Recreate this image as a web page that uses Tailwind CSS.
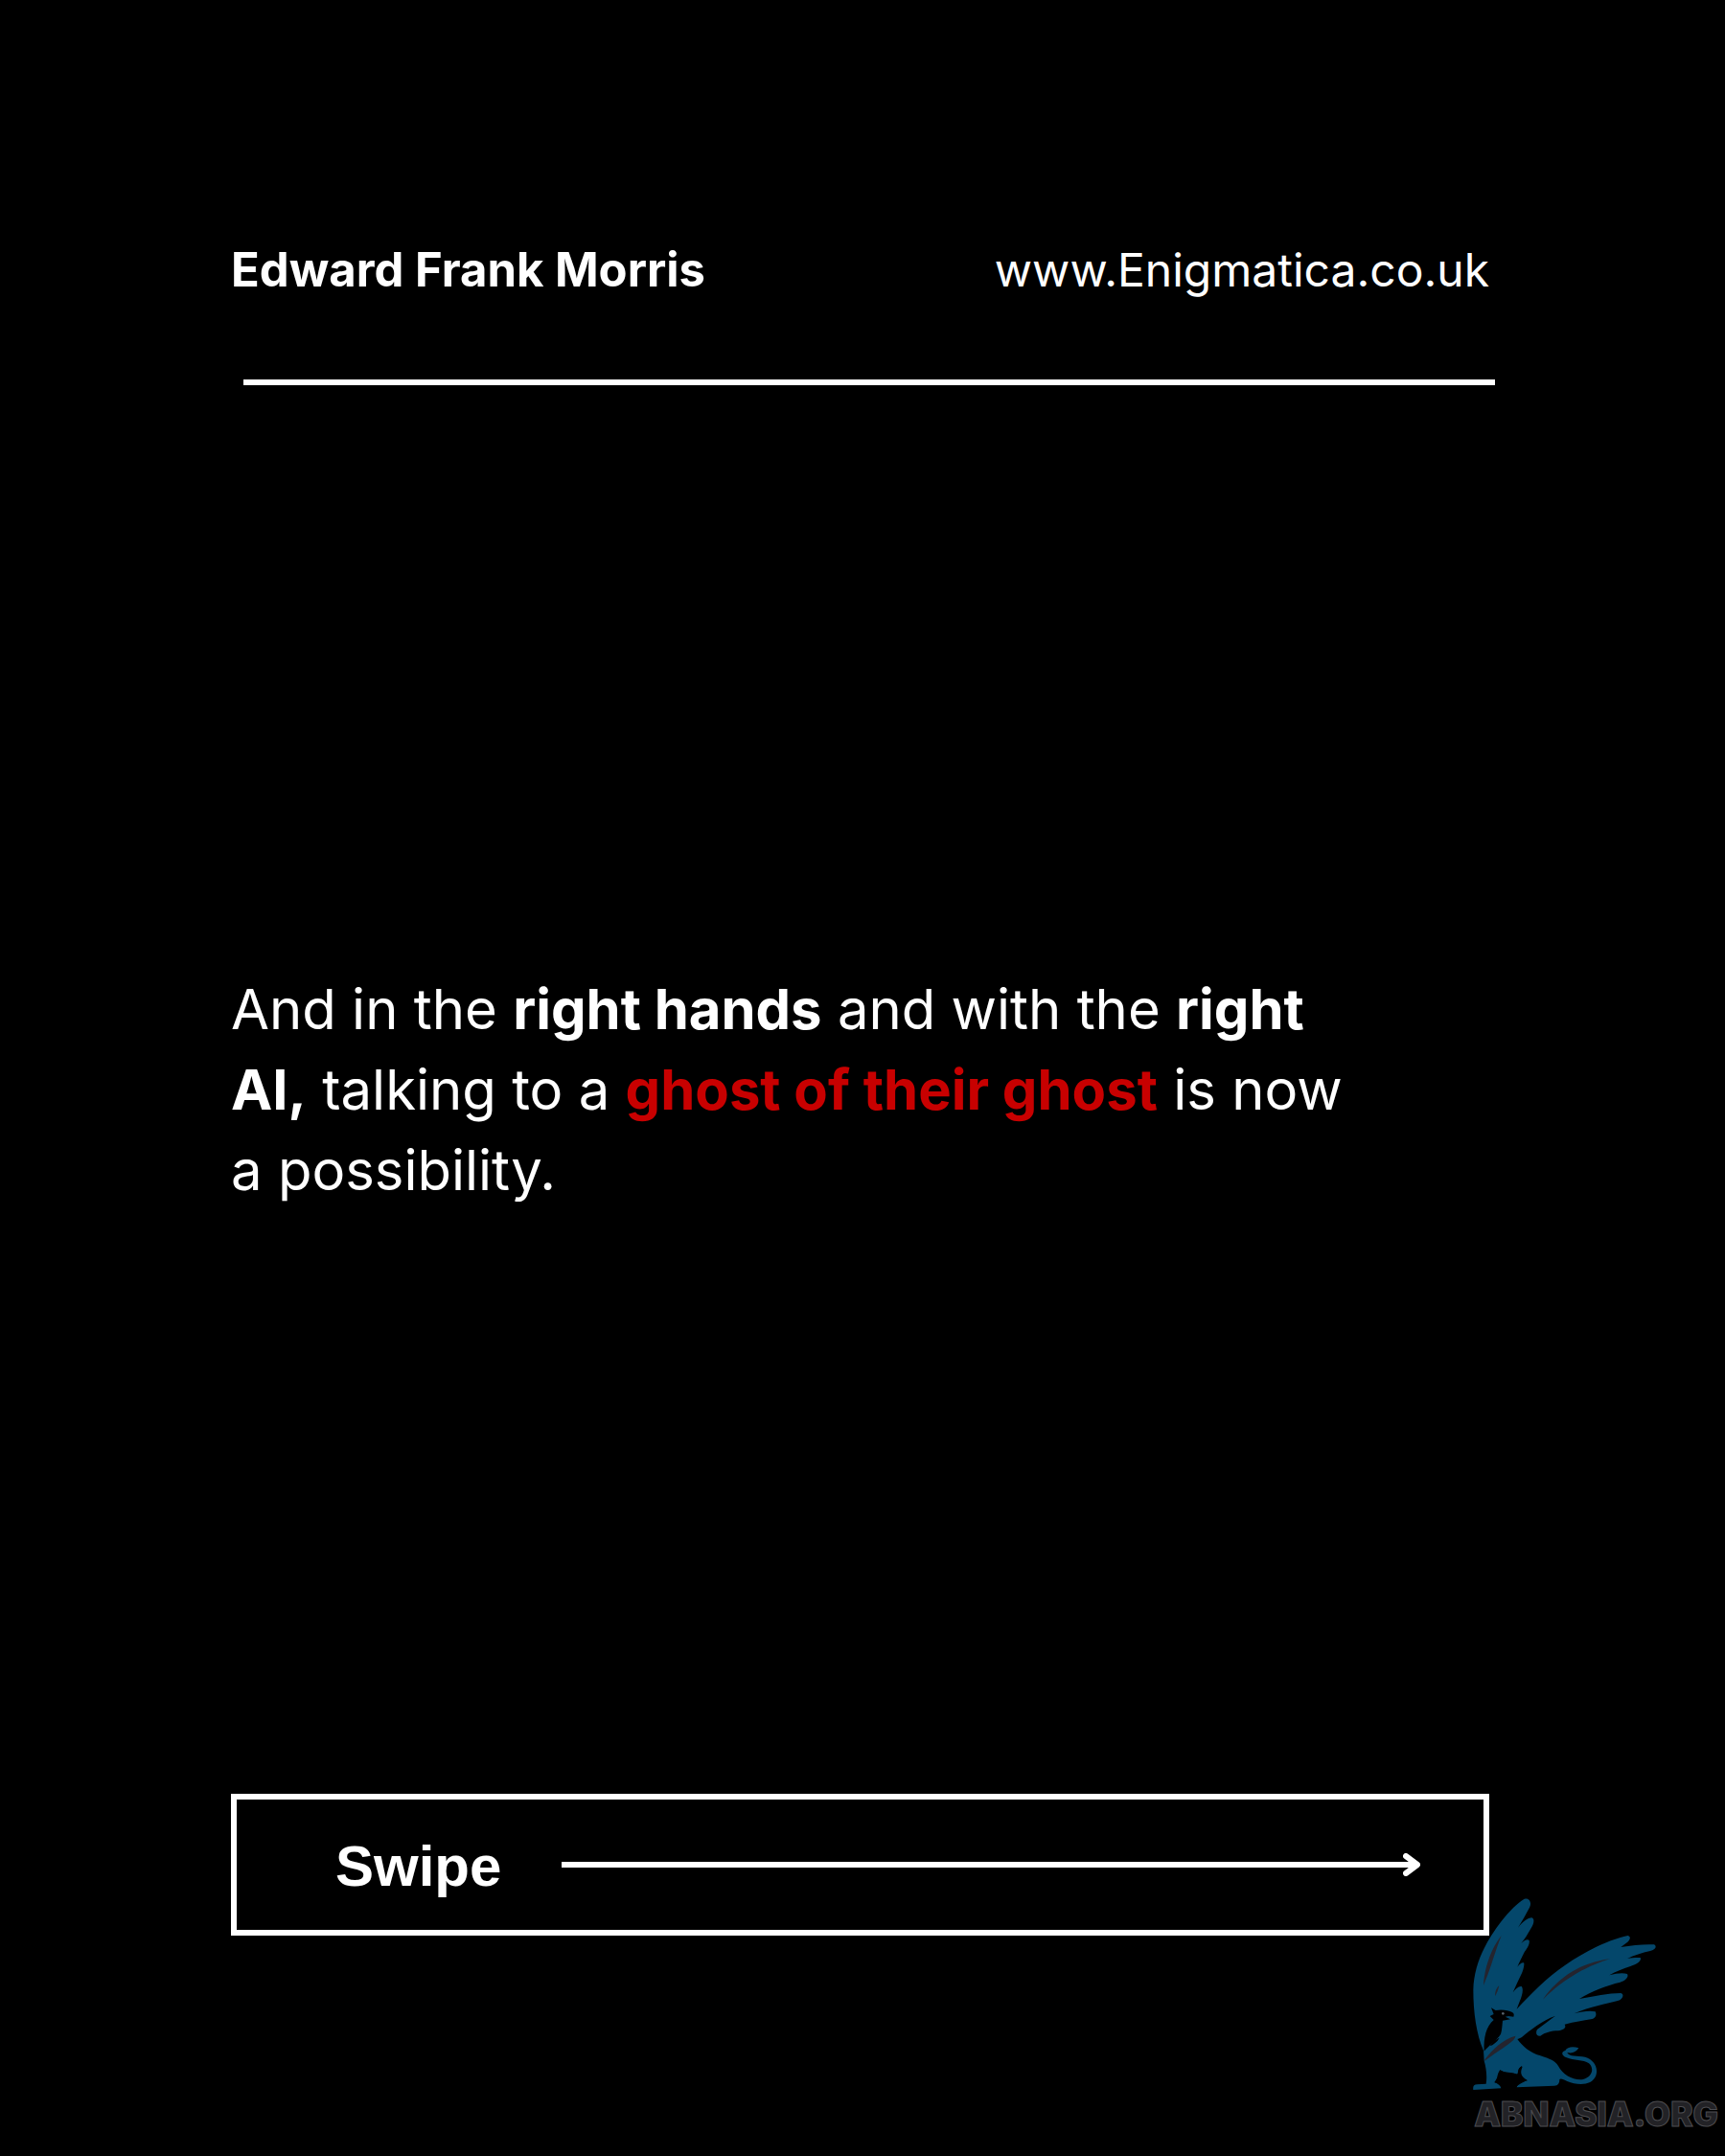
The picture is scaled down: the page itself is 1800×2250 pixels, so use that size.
<!DOCTYPE html>
<html lang="en">
<head>
<meta charset="utf-8">
<meta name="viewport" content="width=device-width, initial-scale=1">
<title>Edward Frank Morris</title>
<script src="https://cdn.jsdelivr.net/npm/@tailwindcss/browser@4"></script>
</head>
<body class="bg-black text-white">
<div class="relative flex min-h-screen flex-col pt-[252px] pr-[246px] pb-[230px] pl-[241px] font-['Inter',sans-serif]">
  <header>
    <div class="flex items-center justify-between text-[49px] leading-[60px]">
      <p class="font-bold">Edward Frank Morris</p>
      <a href="https://www.enigmatica.co.uk" class="text-5xl leading-[60px] font-normal">www.Enigmatica.co.uk</a>
    </div>
    <hr class="mt-[84px] -mr-1.5 ml-[13px] border-t-6 border-white">
  </header>
  <main class="flex grow flex-col justify-center">
    <p class="max-w-[1180px] text-[58px] leading-[84px]">And in the <strong class="font-bold">right hands</strong> and with the <strong class="font-bold">right AI,</strong> talking to a <strong class="font-bold text-[#c80000]">ghost of their ghost</strong> is now a possibility.</p>
  </main>
  <button type="button" class="flex h-[148px] items-center border-6 border-white pr-[66px] pl-[103px] font-['Liberation_Sans',sans-serif] text-6xl font-bold">
    <span class="pt-[3px]">Swipe</span>
    <span class="ml-[63px] h-1.5 grow bg-white"></span>
    <svg class="-ml-3 h-6 w-[18px]" viewBox="0 0 18 24" fill="none" stroke="white" stroke-width="6" stroke-linecap="round" stroke-linejoin="round" aria-hidden="true"><path d="M3 3 15 12 3 21"/></svg>
  </button>
  <a href="https://abnasia.org" class="absolute right-[7px] bottom-[29px] flex flex-col">
    <svg class="-mb-[9px] -ml-[18px] size-60" viewBox="0 0 720 720" aria-hidden="true">
      <g fill="#04476b">
        <path d="M84 540C62 490 52 420 52 350C54 270 90 200 140 135C165 103 190 78 212 65C228 60 236 78 228 92C216 115 204 135 192 155C206 138 222 124 236 124C246 130 240 146 232 158C222 176 212 192 202 204C212 194 222 190 227 195C230 206 220 220 212 232C204 248 196 264 190 278C198 268 206 262 211 266C212 280 204 300 196 314C188 330 182 345 176 358C184 348 196 336 204 340C210 350 204 370 198 384L188 410C230 366 280 312 340 272C410 224 480 192 536 180C548 184 542 196 530 204L514 216C550 210 590 206 618 208C628 214 622 224 606 228C580 234 555 242 534 252C550 250 566 248 576 250C578 262 560 270 544 276C520 284 498 292 478 304C500 298 520 296 534 300C540 310 528 322 512 326C470 336 425 352 384 378C430 370 475 360 514 360C526 364 520 380 504 384C465 394 420 402 368 424C392 418 415 414 434 418C440 430 434 440 420 442C396 446 370 450 338 458C345 470 332 476 318 478C296 478 276 484 262 494C250 496 246 484 252 474C270 460 290 446 308 432C270 444 228 478 204 498C198 502 194 503 190 504C206 526 228 546 262 556C292 566 308 572 318 588C334 618 366 634 396 630C424 622 432 596 414 580C396 568 366 572 344 562C328 556 326 544 340 540C346 528 364 526 382 532C374 544 362 550 346 546C352 560 378 556 402 560C430 568 444 594 436 618C424 650 380 650 346 636C334 630 326 626 322 630C322 642 318 650 306 650L188 655C190 644 204 638 222 634C204 622 196 614 206 590C190 590 194 614 188 614C168 604 154 612 140 602C130 624 120 634 118 640C130 644 138 650 139 658L52 663C50 652 54 646 64 646L92 644C96 620 92 592 86 572Z"/>
      </g>
      <path fill="#000" d="M86 542C84 500 92 464 116 444L104 432L116 426L108 406L122 414C142 410 162 414 174 420C180 424 180 428 178 434L162 432L152 434L168 442L144 446C142 464 142 476 138 488C124 510 100 524 86 542Z"/>
      <path fill="#000" d="M104 526C114 510 124 504 134 500C126 514 114 522 104 526ZM136 600C148 612 166 608 190 614C196 626 208 628 220 632C206 640 192 646 186 655L139 656C136 646 126 642 120 638C130 628 124 616 136 600Z"/>
      <path d="M206 628C190 614 190 600 203 589" fill="none" stroke="#000" stroke-width="3"/>
      <circle cx="145" cy="424" r="4" fill="#57626b"/>
      <g fill="#24242e">
        <path d="M140 180C120 228 108 280 84 336C86 286 106 222 140 180ZM133 336C130 350 126 360 120 370C120 354 124 344 133 336ZM480 253C414 274 344 308 270 380C318 310 390 264 480 253ZM88 568C112 536 146 504 184 494C184 510 150 526 88 572Z"/>
      </g>
    </svg>
    <span class="text-[35px] leading-[30px] font-black text-[#222226] [-webkit-text-stroke:1px_#4c4c50]">ABNASIA.ORG</span>
  </a>
</div>
</body>
</html>
